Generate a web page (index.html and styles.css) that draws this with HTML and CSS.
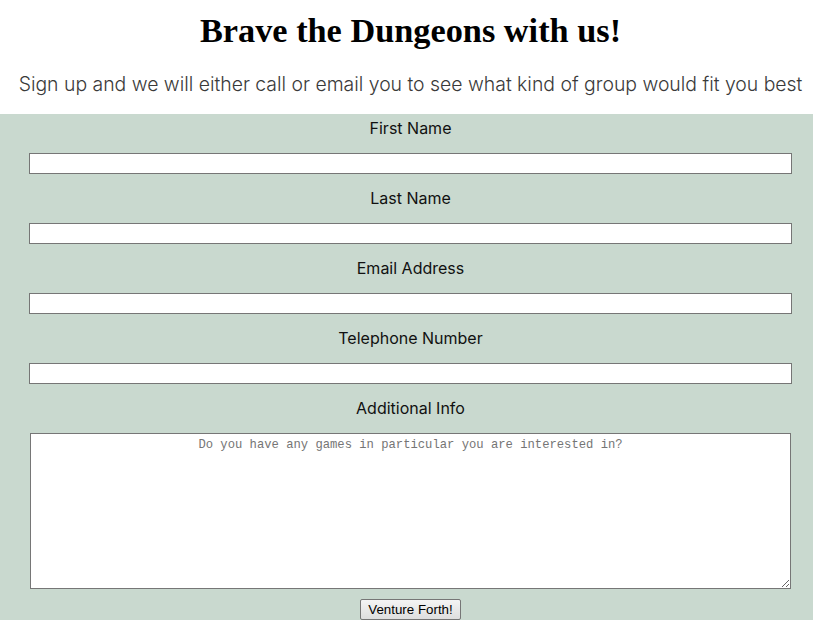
FILE: index.html
```html
<!DOCTYPE html>
<html lang="en">
<head>
<meta charset="utf-8">
<title>Brave the Dungeons</title>
<link rel="stylesheet" href="styles.css">
</head>
<body>
<header class="intro">
  <h1 class="title">Brave the Dungeons with us!</h1>
  <p class="lead">Sign up and we will either call or email you to see what kind of group would fit you best</p>
</header>
<form class="signup">
  <label class="field-label" for="first">First Name</label>
  <input class="field" id="first" type="text">
  <label class="field-label" for="last">Last Name</label>
  <input class="field" id="last" type="text">
  <label class="field-label" for="email">Email Address</label>
  <input class="field" id="email" type="email">
  <label class="field-label" for="tel">Telephone Number</label>
  <input class="field" id="tel" type="tel">
  <label class="field-label" for="info">Additional Info</label>
  <textarea class="info" id="info" placeholder="Do you have any games in particular you are interested in?"></textarea>
  <button class="submit" type="submit">Venture Forth!</button>
</form>
</body>
</html>
```

FILE: styles.css
```css
html, body {
  margin: 0;
  padding: 0;
  background: #ffffff;
}

.intro {
  display: flex;
  flex-direction: column;
  align-items: center;
  padding: 0 21px 0 29px;
}

.title {
  margin: 10px 0 0;
  font-family: "Liberation Serif", serif;
  font-weight: bold;
  font-size: 34.3px;
  line-height: 40px;
  color: #000;
}

.lead {
  margin: 22px 0 0;
  height: 42px;
  font-family: "Inter", sans-serif;
  font-weight: 300;
  font-size: 19.4px;
  line-height: 24px;
  color: #3a3a3a;
  white-space: nowrap;
}

.signup {
  display: flex;
  flex-direction: column;
  align-items: stretch;
  background: #c9d9cf;
  padding: 5px 21px 0 29px;
}

.field-label {
  text-align: center;
  font-family: "Inter", sans-serif;
  font-size: 16px;
  line-height: 19px;
  color: #111;
  margin-bottom: 15px;
}

.field {
  box-sizing: border-box;
  height: 21px;
  margin: 0 0 15px;
  border: 1px solid #767676;
  background: #fff;
  padding: 1px 2px;
}

.info {
  box-sizing: border-box;
  height: 156px;
  margin: 0 1px 10px;
  border: 1px solid #767676;
  background: #fff;
  padding: 3px 2px 2px;
  text-align: center;
  font-family: "Liberation Mono", monospace;
  font-size: 12.2px;
  line-height: 16px;
  resize: both;
}

.info::placeholder {
  color: #757575;
}

.submit {
  align-self: center;
  box-sizing: border-box;
  height: 21px;
  padding: 1px 7px;
  border: 1px solid #767676;
  border-radius: 2px;
  background: linear-gradient(#f4f4f4, #dedede);
  font-family: "Liberation Sans", Arial, sans-serif;
  font-size: 13.33px;
  color: #000;
}
```
